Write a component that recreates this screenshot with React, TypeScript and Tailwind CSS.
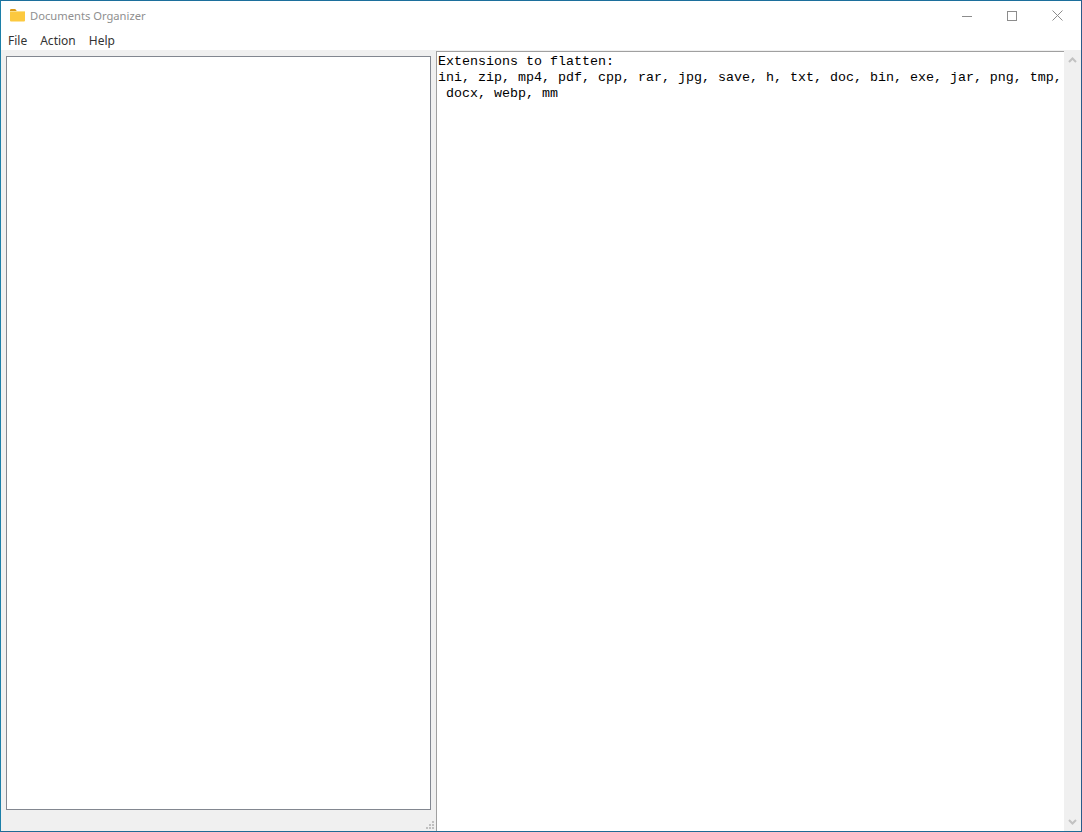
const extensions = "ini, zip, mp4, pdf, cpp, rar, jpg, save, h, txt, doc, bin, exe, jar, png, tmp,";

function FolderIcon() {
  return (
    <svg width="16" height="13" viewBox="0 0 16 13" className="ml-[9px]">
      <path d="M0 1.5C0 .7.5 0 1.2 0h4l1.6 2H0z" fill="#d99b1c" />
      <rect x="0" y="2" width="15" height="10.5" rx="1" fill="#fcc93f" />
      <rect x="0" y="2" width="15" height="1" fill="#fbe08a" />
    </svg>
  );
}

function WindowButtons() {
  return (
    <div className="mr-[1px] flex h-full text-[#8c8c8c]">
      <div className="flex w-[45px] items-center justify-center">
        <svg width="10" height="10" viewBox="0 0 10 10">
          <path d="M0 5.5h10" stroke="currentColor" />
        </svg>
      </div>
      <div className="flex w-[45px] items-center justify-center">
        <svg width="10" height="10" viewBox="0 0 10 10">
          <rect x=".5" y=".5" width="9" height="9" fill="none" stroke="currentColor" />
        </svg>
      </div>
      <div className="flex w-[46px] items-center justify-center">
        <svg width="11" height="11" viewBox="0 0 11 11">
          <path d="M.5.5l10 10M10.5.5l-10 10" stroke="currentColor" fill="none" />
        </svg>
      </div>
    </div>
  );
}

function Grip() {
  return (
    <svg width="9" height="9" viewBox="0 0 9 9" className="absolute bottom-[1px] right-[-4px]" fill="#c0c0c0">
      <rect x="6" y="0" width="2" height="2" />
      <rect x="3" y="3" width="2" height="2" />
      <rect x="6" y="3" width="2" height="2" />
      <rect x="0" y="6" width="2" height="2" />
      <rect x="3" y="6" width="2" height="2" />
      <rect x="6" y="6" width="2" height="2" />
    </svg>
  );
}

export default function App() {
  return (
    <div className="flex h-[832px] w-[1082px] flex-col overflow-hidden border border-t-[#1c6f9c] border-r-[#2b5a8a] border-b-[#1f6a94] border-l-[#1c7fa8] bg-white font-['Noto_Sans',sans-serif] text-[12px]">
      <div className="flex h-[29px] shrink-0 items-center justify-between">
        <div className="flex items-center">
          <FolderIcon />
          <span className="ml-[4px] pt-[2px] text-[11.2px] text-[#8f8f8f]">Documents Organizer</span>
        </div>
        <WindowButtons />
      </div>

      <div className="flex h-[20px] shrink-0 items-center gap-[13px] px-[7px] pt-[2px] text-[#333]">
        <span>File</span>
        <span>Action</span>
        <span>Help</span>
      </div>

      <div className="flex min-h-0 flex-1 bg-[#f0f0f0]">
        <div className="relative w-[430px] shrink-0 pb-[21px] pl-[5px] pt-[6px]">
          <div className="h-full w-[425px] border border-[#828790] bg-white" />
          <Grip />
        </div>

        <div className="ml-[5px] flex min-w-0 flex-1 pt-[1px]">
          <div className="flex-1 border-l border-t border-[#a0a0a0] bg-white pl-[1px] pt-[2px] font-['Liberation_Mono',monospace] text-[13.33px] leading-[16px] text-black whitespace-pre">
            <div>Extensions to flatten:</div>
            <div>{extensions}</div>
            <div> docx, webp, mm</div>
          </div>
          <div className="flex w-[17px] shrink-0 flex-col items-center justify-between bg-[#f0f0f0] py-[6px]">
            <svg width="9" height="6" viewBox="0 0 9 6">
              <path d="M1 5l3.5-3.5L8 5" fill="none" stroke="#c2c2c2" strokeWidth="2" />
            </svg>
            <svg width="9" height="6" viewBox="0 0 9 6">
              <path d="M1 1l3.5 3.5L8 1" fill="none" stroke="#c2c2c2" strokeWidth="2" />
            </svg>
          </div>
        </div>
      </div>
    </div>
  );
}
